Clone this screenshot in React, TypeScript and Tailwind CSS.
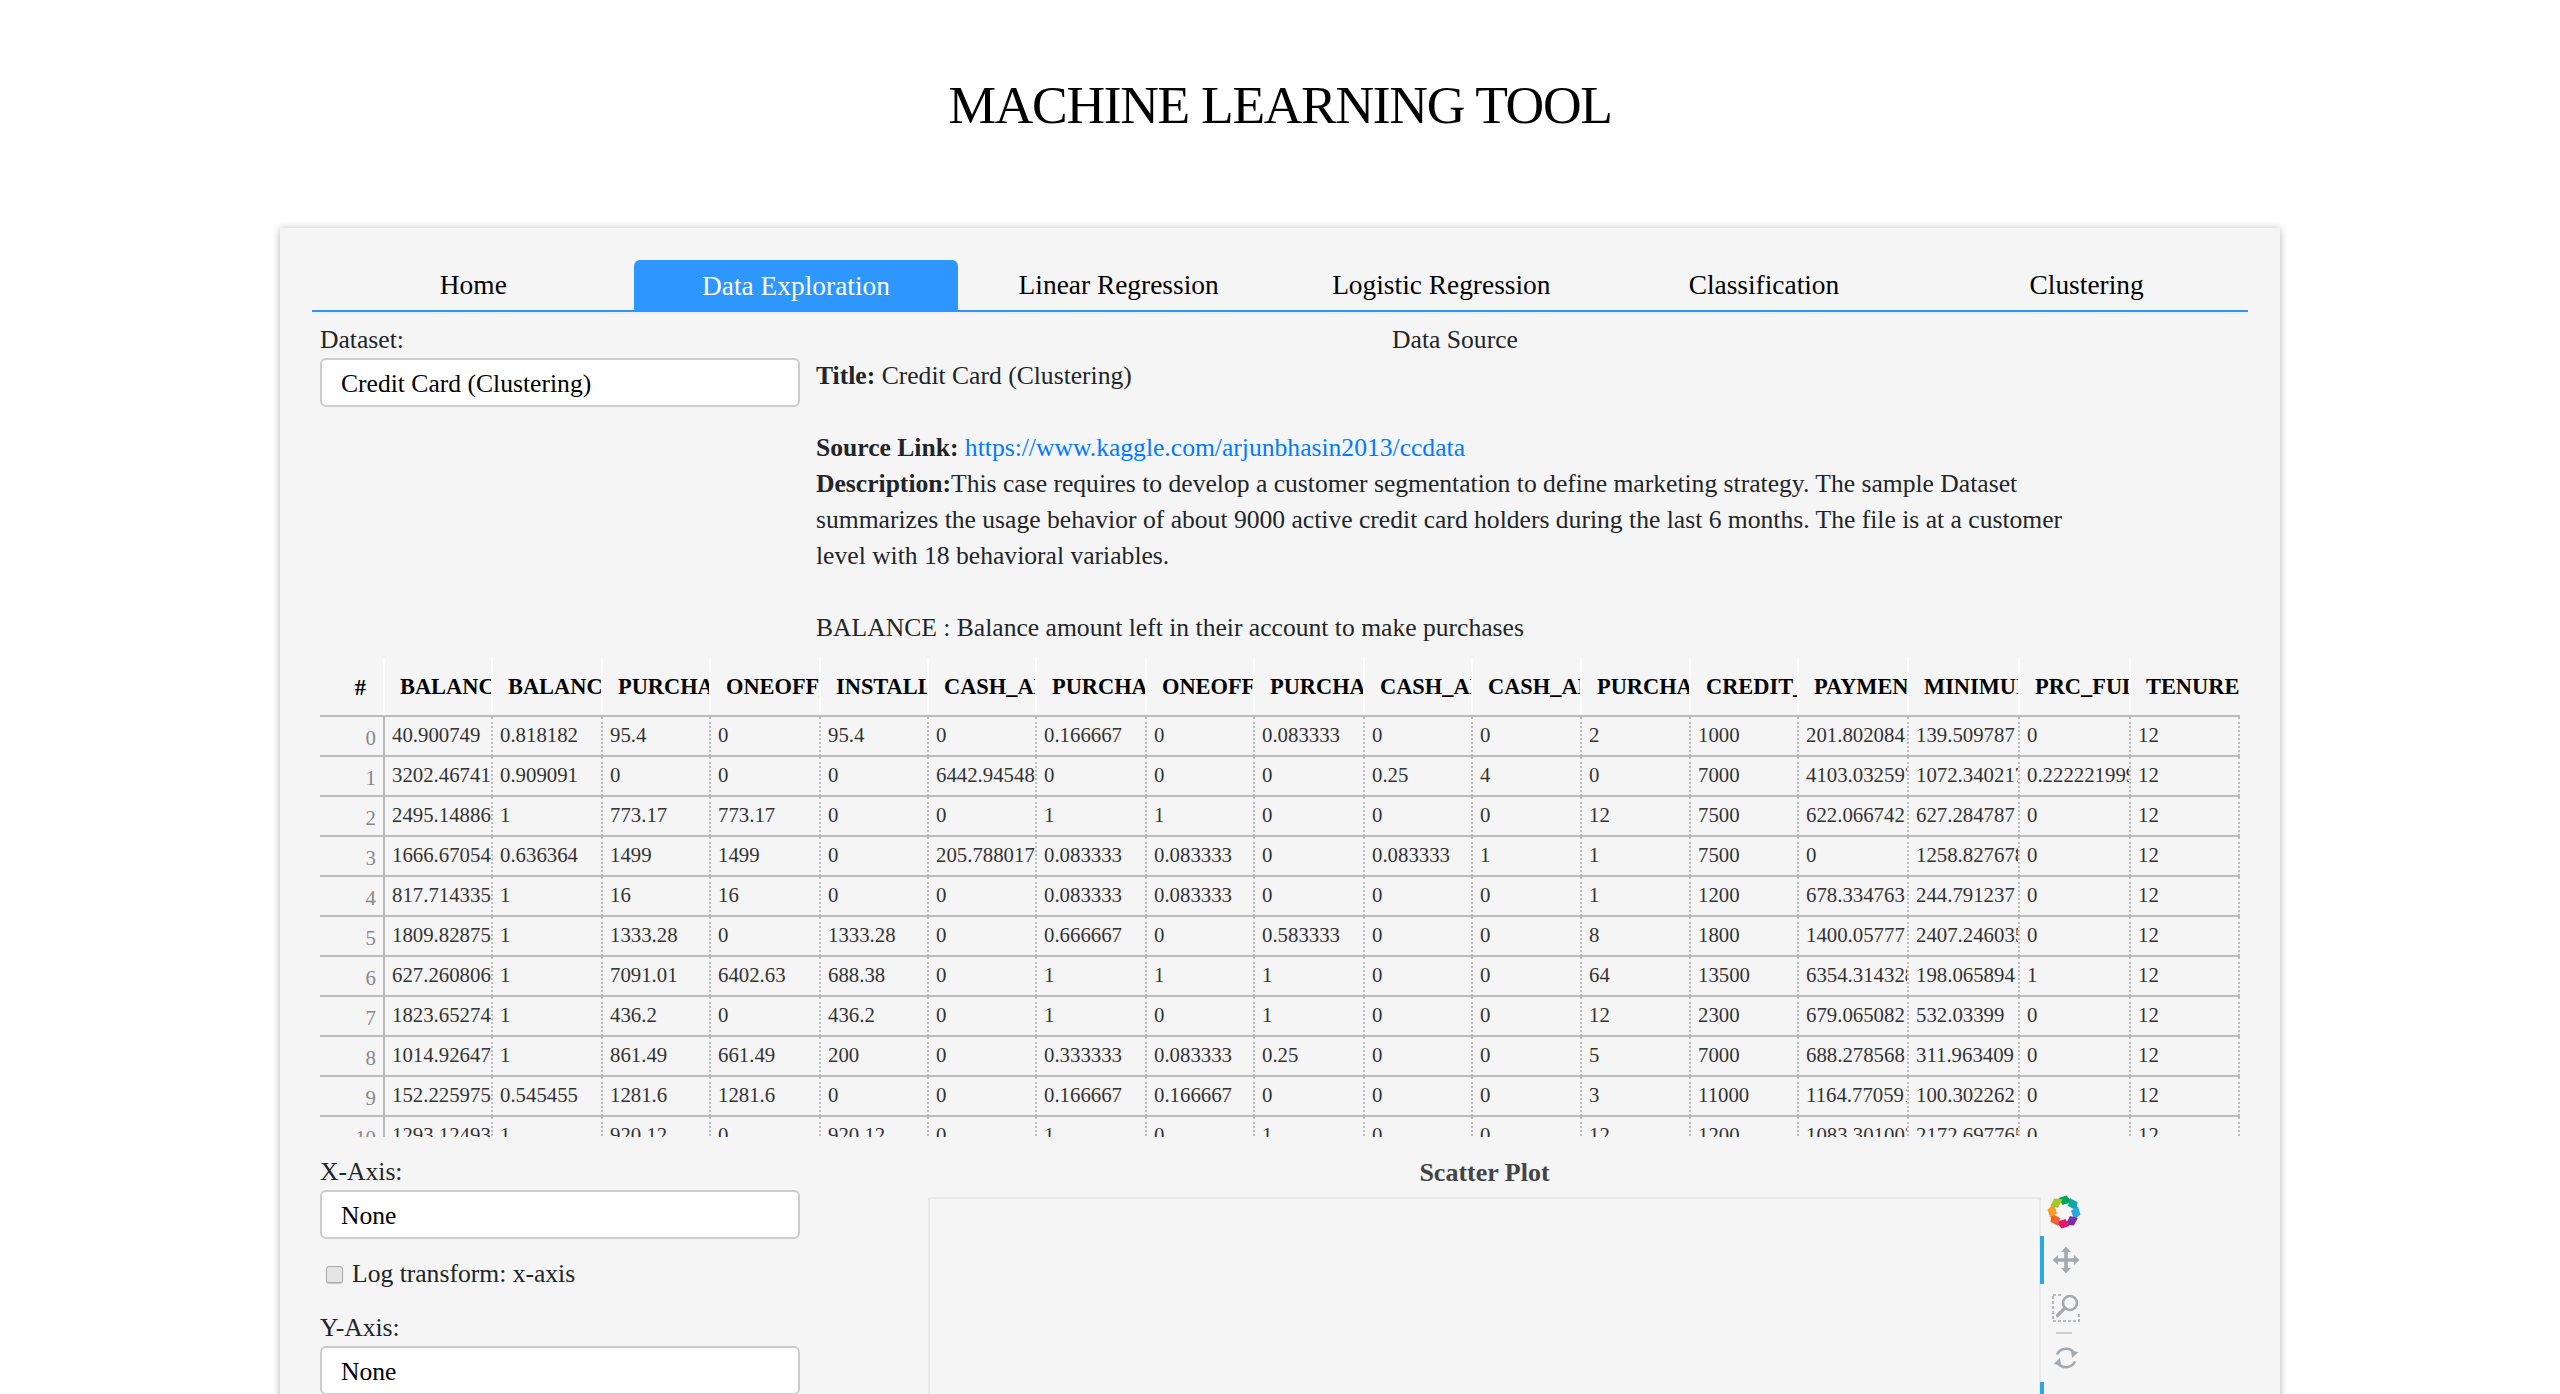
const tabs = ["Home", "Data Exploration", "Linear Regression", "Logistic Regression", "Classification", "Clustering"];

const columns = [
	"BALANCE",
	"BALANCE_FREQUENCY",
	"PURCHASES",
	"ONEOFF_PURCHASES",
	"INSTALLMENTS_PURCHASES",
	"CASH_ADVANCE",
	"PURCHASES_FREQUENCY",
	"ONEOFF_PURCHASES_FREQUENCY",
	"PURCHASES_INSTALLMENTS_FREQUENCY",
	"CASH_ADVANCE_FREQUENCY",
	"CASH_ADVANCE_TRX",
	"PURCHASES_TRX",
	"CREDIT_LIMIT",
	"PAYMENTS",
	"MINIMUM_PAYMENTS",
	"PRC_FULL_PAYMENT",
	"TENURE",
];

const rows = [
	["40.900749", "0.818182", "95.4", "0", "95.4", "0", "0.166667", "0", "0.083333", "0", "0", "2", "1000", "201.802084", "139.509787", "0", "12"],
	["3202.467416", "0.909091", "0", "0", "0", "6442.945483", "0", "0", "0", "0.25", "4", "0", "7000", "4103.032597", "1072.340217", "0.222221999", "12"],
	["2495.148862", "1", "773.17", "773.17", "0", "0", "1", "1", "0", "0", "0", "12", "7500", "622.066742", "627.284787", "0", "12"],
	["1666.670542", "0.636364", "1499", "1499", "0", "205.788017", "0.083333", "0.083333", "0", "0.083333", "1", "1", "7500", "0", "1258.827678", "0", "12"],
	["817.714335", "1", "16", "16", "0", "0", "0.083333", "0.083333", "0", "0", "0", "1", "1200", "678.334763", "244.791237", "0", "12"],
	["1809.828751", "1", "1333.28", "0", "1333.28", "0", "0.666667", "0", "0.583333", "0", "0", "8", "1800", "1400.05777", "2407.246035", "0", "12"],
	["627.260806", "1", "7091.01", "6402.63", "688.38", "0", "1", "1", "1", "0", "0", "64", "13500", "6354.314328", "198.065894", "1", "12"],
	["1823.652743", "1", "436.2", "0", "436.2", "0", "1", "0", "1", "0", "0", "12", "2300", "679.065082", "532.03399", "0", "12"],
	["1014.926473", "1", "861.49", "661.49", "200", "0", "0.333333", "0.083333", "0.25", "0", "0", "5", "7000", "688.278568", "311.963409", "0", "12"],
	["152.225975", "0.545455", "1281.6", "1281.6", "0", "0", "0.166667", "0.166667", "0", "0", "0", "3", "11000", "1164.770591", "100.302262", "0", "12"],
	["1293.124939", "1", "920.12", "0", "920.12", "0", "1", "0", "1", "0", "0", "12", "1200", "1083.301007", "2172.697765", "0", "12"],
];

const petals = ["#0aa35b", "#12a5a5", "#2aa9e0", "#7b2fa0", "#e0156e", "#f2602b", "#f99a2a", "#a5c92b"];

function BokehLogo() {
	return (
		<svg width="34" height="34" viewBox="0 0 34 34">
			{petals.map((color, i) => (
				<path key={i} d="M11.5 3 L19.5 0.5 L25 7 L15.5 10 Z" fill={color} transform={`rotate(${i * 45} 17 17)`} />
			))}
		</svg>
	);
}

function PanIcon() {
	return (
		<svg width="28" height="28" viewBox="0 0 28 28" fill="#a3a9ad">
			<path d="M14 0.5 L19 6 H15.8 V12.2 H22 V9 L27.5 14 L22 19 V15.8 H15.8 V22 H19 L14 27.5 L9 22 H12.2 V15.8 H6 V19 L0.5 14 L6 9 V12.2 H12.2 V6 H9 Z" />
		</svg>
	);
}

function BoxZoomIcon() {
	return (
		<svg width="28" height="28" viewBox="0 0 28 28" fill="none" stroke="#a3a9ad">
			<rect x="1" y="1" width="26" height="26" strokeWidth="1.6" strokeDasharray="3 2" />
			<rect x="10" y="0" width="18" height="18" fill="#f5f5f5" stroke="none" />
			<circle cx="18" cy="9" r="7" strokeWidth="2.6" fill="#f5f5f5" />
			<path d="M13 14 L5.5 21.5" strokeWidth="3.2" strokeLinecap="round" />
		</svg>
	);
}

function ResetIcon() {
	return (
		<svg width="28" height="28" viewBox="0 0 28 28" fill="none" stroke="#a3a9ad" strokeWidth="2.6">
			<path d="M5 10.5 A10 10 0 0 1 22.5 9.5" />
			<path d="M23 17.5 A10 10 0 0 1 5.5 18.5" />
			<path d="M26.5 8 L20 14 L19 7 Z" fill="#a3a9ad" stroke="none" />
			<path d="M1.5 20 L8 14 L9 21 Z" fill="#a3a9ad" stroke="none" />
		</svg>
	);
}

function Dropdown({ value }: { value: string }) {
	return (
		<select className="appearance-none block w-[480px] h-[49px] bg-white border-2 border-[#cccccc] rounded-[6px] pl-[19px] pt-[2px] text-[25.6px] text-black outline-none">
			<option>{value}</option>
		</select>
	);
}

const tableGrid = "grid grid-cols-[63px_108px_110px_108px_110px_108px_108px_110px_108px_110px_108px_109px_109px_108px_110px_111px_111px_111px]";

function DataTable() {
	return (
		<div className="ml-2 h-[479px] w-[1920px] overflow-hidden text-[20.8px]">
			<div className={`${tableGrid} h-[59px] border-b-2 border-[#bbbbbb] font-bold text-[22.4px] text-black`}>
				<div className="flex items-center justify-end pr-[17px] pt-[2px]">#</div>
				{columns.map((name) => (
					<div key={name} className="overflow-hidden whitespace-nowrap border-l-2 border-white pl-[15px] pt-[11px]">
						{name}
					</div>
				))}
			</div>
			{rows.map((row, i) => (
				<div key={i} className={`${tableGrid} h-[40px] border-b-2 border-[#bbbbbb] text-[#333333]`}>
					<div className="text-right pr-[7px] pt-[3px] text-[#888888] border-r-2 border-[#bbbbbb] -mr-[2px]">{i}</div>
					{row.map((value, j) => (
						<div key={j} className="overflow-hidden whitespace-nowrap border-l-2 border-dotted border-[#bbbbbb] pl-[7px] last:border-r-2">
							{value}
						</div>
					))}
				</div>
			))}
		</div>
	);
}

export default function App() {
	return (
		<div className="h-[1394px] overflow-hidden bg-white pt-[71px] text-[#212529] text-[25.6px] leading-[36px]" style={{ fontFamily: '"Liberation Serif", serif' }}>
			<h1 className="text-center text-[53.5px] tracking-[-1.3px] leading-[68px] font-normal text-black">MACHINE LEARNING TOOL</h1>

			<div className="mx-auto mt-[89px] w-[2000px] min-h-[1200px] bg-[#f5f5f5] shadow-[0_1px_8px_rgba(0,0,0,0.3)] px-[32px] pt-[32px]">
				<div className="flex h-[52px] border-b-2 border-[#2d96ff] shadow-[0_2px_0_#eeeeee] w-[1936px] text-[27.4px]">
					{tabs.map((tab) =>
						tab === "Data Exploration" ? (
							<div key={tab} className="-mx-[1px] w-[324.67px] h-[52px] flex items-center justify-center bg-[#2d96ff] text-white rounded-t-[6px]">
								{tab}
							</div>
						) : (
							<div key={tab} className="w-[322.67px] h-[50px] flex items-center justify-center text-black">
								{tab}
							</div>
						),
					)}
				</div>

				<div className="flex pt-[10px] pl-2">
					<div className="w-[480px]">
						<div>Dataset:</div>
						<Dropdown value="Credit Card (Clustering)" />
					</div>
					<div className="ml-[16px] w-[1278px]">
						<div className="text-center">Data Source</div>
						<div>
							<b>Title:</b> Credit Card (Clustering)
						</div>
						<div className="h-[36px]" />
						<div>
							<b>Source Link:</b> <a className="text-[#007bff]">https://www.kaggle.com/arjunbhasin2013/ccdata</a>
						</div>
						<div>
							<b>Description:</b>This case requires to develop a customer segmentation to define marketing strategy. The sample Dataset summarizes the usage behavior of about 9000 active credit card holders during the last 6 months. The file is at a customer level with 18 behavioral variables.
						</div>
						<div className="h-[36px]" />
						<div>BALANCE : Balance amount left in their account to make purchases</div>
					</div>
				</div>

				<div className="mt-[12px]">
					<DataTable />
				</div>

				<div className="flex pt-[17px] pl-2">
					<div className="w-[480px]">
						<div>X-Axis:</div>
						<Dropdown value="None" />
						<label className="flex items-center mt-[17px] ml-[6px]">
							<input type="checkbox" className="appearance-none w-[17px] h-[17px] bg-[#e4e4e4] border border-[#aaaaaa] rounded-[3px] mr-[9px] shadow-[0_1px_1px_rgba(0,0,0,0.2)]" />
							Log transform: x-axis
						</label>
						<div className="mt-[18px]">Y-Axis:</div>
						<Dropdown value="None" />
					</div>
					<div className="ml-[128px] w-[1113px]">
						<div className="text-center font-bold text-[#444444] text-[26px] pt-[1px] -mb-[1px]">Scatter Plot</div>
						<div className="flex mt-[7px]">
							<div className="w-[1113px] h-[400px] border-2 border-[#e8e8e8] shrink-0" />
							<div className="-ml-[1px] flex flex-col">
								<div className="h-[39px] w-[50px] pl-[7px] -mt-[2px] mb-[2px]">
									<BokehLogo />
								</div>
								<div className="h-[48px] w-[48px] border-l-4 border-[#26aae1] flex items-center justify-center"><PanIcon /></div>
								<div className="h-[48px] w-[48px] border-l-4 border-transparent flex items-center justify-center"><BoxZoomIcon /></div>
								<div className="h-[2px] w-[16px] ml-[16px] bg-[#cccccc]" />
								<div className="h-[48px] w-[48px] border-l-4 border-transparent flex items-center justify-center"><ResetIcon /></div>
								<div className="h-[48px] w-[48px] border-l-4 border-[#26aae1]" />
							</div>
						</div>
					</div>
				</div>
			</div>
		</div>
	);
}
